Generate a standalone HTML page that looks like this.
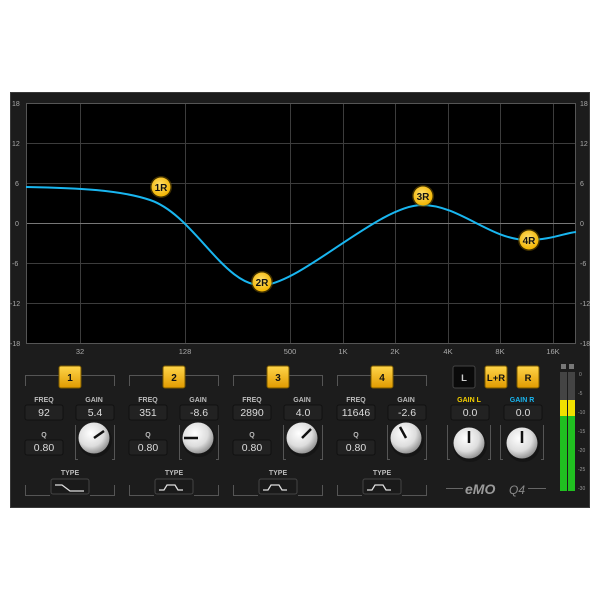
<!DOCTYPE html>
<html><head><style>
body{margin:0;background:#fff;width:600px;height:600px;overflow:hidden}
svg text{font-family:"Liberation Sans",sans-serif}
</style></head><body>
<svg width="600" height="600" viewBox="0 0 600 600">
<defs>
<radialGradient id="kn" cx="40%" cy="35%" r="70%"><stop offset="0" stop-color="#fff"/><stop offset=".6" stop-color="#ddd"/><stop offset="1" stop-color="#888"/></radialGradient>
<linearGradient id="btn" x1="0" y1="0" x2="0" y2="1"><stop offset="0" stop-color="#ffd54a"/><stop offset="1" stop-color="#e09a00"/></linearGradient>
<radialGradient id="nd" cx="45%" cy="40%" r="60%"><stop offset="0" stop-color="#ffe070"/><stop offset="1" stop-color="#f2b400"/></radialGradient>
</defs>
<rect x="10" y="92" width="580" height="416" fill="#1c1c1c"/>
<rect x="10.5" y="92.5" width="579" height="415" fill="none" stroke="#3a3a3a"/>
<rect x="26" y="103" width="550" height="241" fill="#000"/>
<g stroke="#3c3c3c" stroke-width="1">
<line x1="26" y1="143.5" x2="576" y2="143.5"/><line x1="26" y1="183.5" x2="576" y2="183.5"/>
<line x1="26" y1="263.5" x2="576" y2="263.5"/><line x1="26" y1="303.5" x2="576" y2="303.5"/>
<line x1="80.5" y1="103" x2="80.5" y2="344"/><line x1="185.5" y1="103" x2="185.5" y2="344"/>
<line x1="290.5" y1="103" x2="290.5" y2="344"/><line x1="343.5" y1="103" x2="343.5" y2="344"/>
<line x1="395.5" y1="103" x2="395.5" y2="344"/><line x1="448.5" y1="103" x2="448.5" y2="344"/>
<line x1="500.5" y1="103" x2="500.5" y2="344"/><line x1="553.5" y1="103" x2="553.5" y2="344"/>
</g>
<line x1="26" y1="223.5" x2="576" y2="223.5" stroke="#777"/>
<rect x="26.5" y="103.5" width="549" height="240" fill="none" stroke="#555"/>
<g fill="#aaa" font-size="7">
<text x="12" y="106">18</text><text x="12" y="146">12</text><text x="15" y="186">6</text><text x="15" y="226">0</text><text x="12" y="266">-6</text><text x="10" y="306">-12</text><text x="10" y="346">-18</text>
<text x="580" y="106">18</text><text x="580" y="146">12</text><text x="580" y="186">6</text><text x="580" y="226">0</text><text x="580" y="266">-6</text><text x="580" y="306">-12</text><text x="580" y="346">-18</text>
</g>
<g fill="#aaa" font-size="7.5" text-anchor="middle">
<text x="80" y="354">32</text><text x="185" y="354">128</text><text x="290" y="354">500</text><text x="343" y="354">1K</text><text x="395" y="354">2K</text><text x="448" y="354">4K</text><text x="500" y="354">8K</text><text x="553" y="354">16K</text>
</g>
<path d="M26,187 C80,188 120,190 150,200 C195,215 225,290 265,285 C305,280 380,205 422,205 C460,205 490,240 528,240 C550,240 565,233 576,232" fill="none" stroke="#19b6f0" stroke-width="2"/>
<g font-size="10" font-weight="bold" text-anchor="middle" fill="#111">
<circle cx="161" cy="187" r="11" fill="#6a5000" opacity=".6"/><circle cx="161" cy="187" r="9.5" fill="url(#nd)"/><text x="161" y="191">1R</text>
<circle cx="262" cy="282" r="11" fill="#6a5000" opacity=".6"/><circle cx="262" cy="282" r="9.5" fill="url(#nd)"/><text x="262" y="286">2R</text>
<circle cx="423" cy="196" r="11" fill="#6a5000" opacity=".6"/><circle cx="423" cy="196" r="9.5" fill="url(#nd)"/><text x="423" y="200">3R</text>
<circle cx="529" cy="240" r="11" fill="#6a5000" opacity=".6"/><circle cx="529" cy="240" r="9.5" fill="url(#nd)"/><text x="529" y="244">4R</text>
</g>
<g id="band">
<path d="M25.5,386 V375.5 H59 M81,375.5 H114.5 V386" fill="none" stroke="#555"/>
<rect x="59" y="366" width="22" height="22" rx="2" fill="url(#btn)" stroke="#7a5a00"/>
<g font-size="7" font-weight="bold" fill="#bbb" text-anchor="middle"><text x="44" y="402">FREQ</text><text x="94" y="402">GAIN</text><text x="44" y="437">Q</text><text x="70" y="475">TYPE</text></g>
<rect x="25" y="405" width="38" height="15" rx="2" fill="#222" stroke="#111"/>
<rect x="76" y="405" width="38" height="15" rx="2" fill="#222" stroke="#111"/>
<rect x="25" y="440" width="38" height="15" rx="2" fill="#222" stroke="#111"/>
<path d="M75.5,425 V459.5 H78 M112,459.5 H114.5 V425" fill="none" stroke="#555"/>
<path d="M25.5,485 V495.5 H50 M90,495.5 H114.5 V485" fill="none" stroke="#555"/>
<rect x="51" y="479" width="38" height="15" rx="2" fill="#1a1a1a" stroke="#444"/>
</g>
<use href="#band" x="104"/><use href="#band" x="208"/><use href="#band" x="312"/>
<rect x="451" y="405" width="38" height="15" rx="2" fill="#222" stroke="#111"/>
<rect x="504" y="405" width="38" height="15" rx="2" fill="#222" stroke="#111"/>
<g font-size="10" font-weight="bold" text-anchor="middle" fill="#111">
<text x="70" y="381">1</text><text x="174" y="381">2</text><text x="278" y="381">3</text><text x="382" y="381">4</text>
</g>
<g font-size="10.5" fill="#ddd" text-anchor="middle">
<text x="44" y="416">92</text><text x="95" y="416">5.4</text><text x="44" y="451">0.80</text>
<text x="148" y="416">351</text><text x="199" y="416">-8.6</text><text x="148" y="451">0.80</text>
<text x="252" y="416">2890</text><text x="303" y="416">4.0</text><text x="252" y="451">0.80</text>
<text x="356" y="416">11646</text><text x="407" y="416">-2.6</text><text x="356" y="451">0.80</text>
<text x="470" y="416">0.0</text><text x="523" y="416">0.0</text>
</g>
<g fill="none" stroke="#ddd" stroke-width="1.3">
<path d="M55,485 H62 L70,491 H84"/>
<path d="M159,490 H164 L167,485 H175 L178,490 H183"/>
<path d="M263,490 H268 L271,485 H279 L282,490 H287"/>
<path d="M367,490 H372 L375,485 H383 L386,490 H391"/>
</g>
<g>
<circle cx="95" cy="440" r="17" fill="#111" opacity=".6"/><circle cx="94" cy="438" r="15.5" fill="url(#kn)"/><line x1="94" y1="438" x2="104" y2="431" stroke="#111" stroke-width="2.5"/>
<circle cx="199" cy="440" r="17" fill="#111" opacity=".6"/><circle cx="198" cy="438" r="15.5" fill="url(#kn)"/><line x1="198" y1="438" x2="184" y2="438" stroke="#111" stroke-width="2.5"/>
<circle cx="303" cy="440" r="17" fill="#111" opacity=".6"/><circle cx="302" cy="438" r="15.5" fill="url(#kn)"/><line x1="302" y1="438" x2="311" y2="429" stroke="#111" stroke-width="2.5"/>
<circle cx="407" cy="440" r="17" fill="#111" opacity=".6"/><circle cx="406" cy="438" r="15.5" fill="url(#kn)"/><line x1="406" y1="438" x2="400" y2="427" stroke="#111" stroke-width="2.5"/>
<circle cx="470" cy="445" r="17" fill="#111" opacity=".6"/><circle cx="469" cy="443" r="15.5" fill="url(#kn)"/><line x1="469" y1="443" x2="469" y2="431" stroke="#111" stroke-width="2.5"/>
<circle cx="523" cy="445" r="17" fill="#111" opacity=".6"/><circle cx="522" cy="443" r="15.5" fill="url(#kn)"/><line x1="522" y1="443" x2="522" y2="431" stroke="#111" stroke-width="2.5"/>
</g>
<path d="M447.5,425 V459.5 H450 M488,459.5 H490.5 V425 M500.5,425 V459.5 H503 M541,459.5 H543.5 V425" fill="none" stroke="#555"/>
<g font-size="7" font-weight="bold" text-anchor="middle"><text x="469" y="402" fill="#f5d000">GAIN L</text><text x="522" y="402" fill="#19b6f0">GAIN R</text></g>
<rect x="453" y="366" width="22" height="22" rx="2" fill="#0a0a0a" stroke="#444"/>
<rect x="485" y="366" width="22" height="22" rx="2" fill="url(#btn)" stroke="#7a5a00"/>
<rect x="517" y="366" width="22" height="22" rx="2" fill="url(#btn)" stroke="#7a5a00"/>
<g font-size="9.5" font-weight="bold" text-anchor="middle"><text x="464" y="381" fill="#ccc">L</text><text x="496" y="381" fill="#111">L+R</text><text x="528" y="381" fill="#111">R</text></g>
<line x1="446" y1="488.5" x2="463" y2="488.5" stroke="#666"/><line x1="528" y1="488.5" x2="546" y2="488.5" stroke="#666"/>
<text x="465" y="494" font-size="14" font-weight="bold" font-style="italic" fill="#9a9a9a">eMO</text>
<text x="509" y="494" font-size="12" font-style="italic" fill="#888">Q4</text>
<rect x="561" y="364" width="5" height="5" fill="#777"/><rect x="569" y="364" width="5" height="5" fill="#777"/>
<rect x="560" y="372" width="7" height="119" fill="#444"/><rect x="568" y="372" width="7" height="119" fill="#444"/>
<rect x="560" y="400" width="7" height="16" fill="#f0e000"/><rect x="568" y="400" width="7" height="16" fill="#f0e000"/>
<rect x="560" y="416" width="7" height="75" fill="#20c020"/><rect x="568" y="416" width="7" height="75" fill="#20c020"/>
<g font-size="5" fill="#999"><text x="579" y="376">0</text><text x="578" y="395">-5</text><text x="578" y="414">-10</text><text x="578" y="433">-15</text><text x="578" y="452">-20</text><text x="578" y="471">-25</text><text x="578" y="490">-30</text></g>
</svg>
</body></html>
